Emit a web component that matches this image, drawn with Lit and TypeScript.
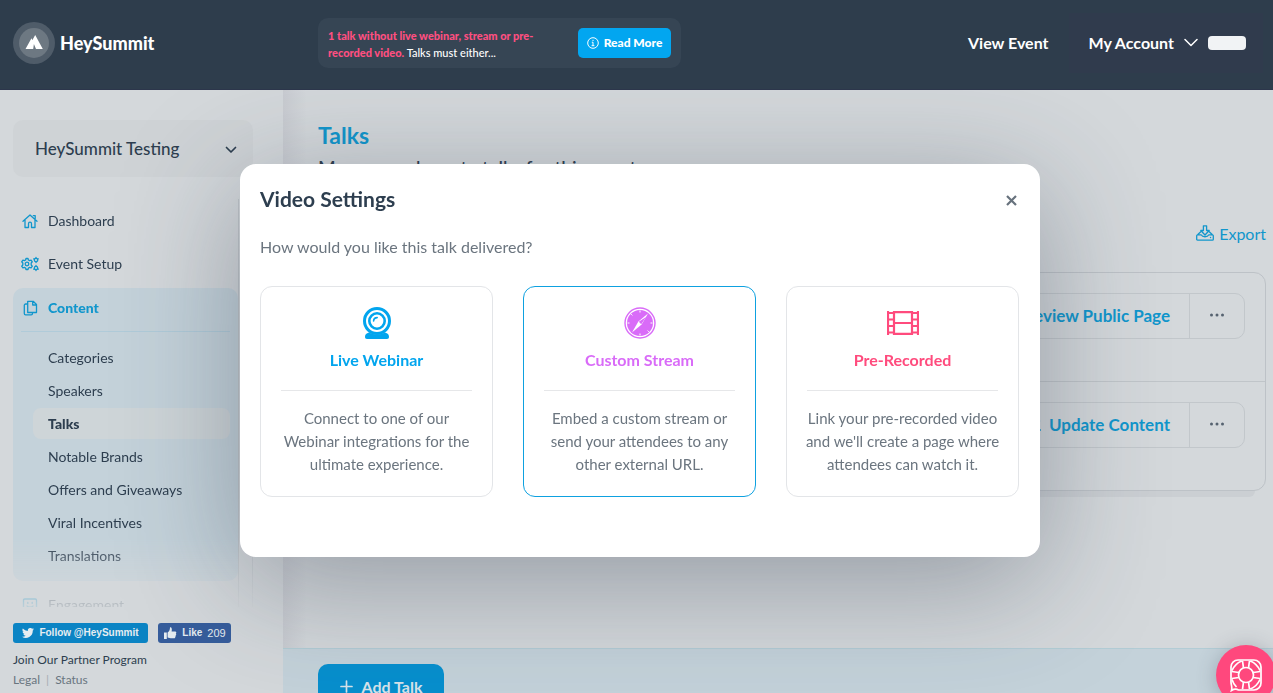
import { LitElement, html, css, svg, nothing } from "lit";
import { customElement, state } from "lit/decorators.js";
import { classMap } from "lit/directives/class-map.js";

const icons = {
  home: svg`<path d="M1 8.200 8 2l7 6.200M3 7v7.500h3.500v-3.800a1.500 1.500 0 0 1 3 0v3.800H13V7M11.300 2.600h1.900v3"/>`,
  copy: svg`<path d="M5.700 1.300h5.500l3.300 3.200v8H5.700zM10.700 1.500v3.500h3.500M5.600 4H3.600a1.300 1.300 0 0 0-1.300 1.300v8.200a1.300 1.300 0 0 0 1.300 1.300h5.600a1.300 1.300 0 0 0 1.300-1.300v-.9"/>`,
  smile: svg`<path d="M1.500 15V3.200c0-.8.4-1.200 1.200-1.200h10.600c.8 0 1.200.4 1.200 1.200V15M5 9c.8 1.400 5.200 1.400 6 0M5.800 5.400v1M10.200 5.400v1"/>`,
};

@customElement("app-root")
export class AppRoot extends LitElement {
  @state() private picked = 1;

  private subItems = ["Categories", "Speakers", "Talks", "Notable Brands", "Offers and Giveaways", "Viral Incentives", "Translations"];

  private options = [
    {
      tone: "blue",
      title: "Live Webinar",
      lines: ["Connect to one of our", "Webinar integrations for the", "ultimate experience."],
      icon: svg`<circle cx="16" cy="14" r="12.500" fill="none" stroke="currentColor" stroke-width="3"/>
        <circle cx="16" cy="14" r="7.700" fill="none" stroke="currentColor" stroke-width="2.600"/>
        <path d="M12.600 14a3.600 3.600 0 0 1 3.600-3.400" fill="none" stroke="currentColor" stroke-width="1.600" stroke-linecap="round"/>
        <path d="M8 25.600c4.800 2.600 11.200 2.600 16 0 2.700.6 4 2.200 4 4.200 0 1.500-.7 2.200-2 2.200H6c-1.300 0-2-.7-2-2.200 0-2 1.300-3.600 4-4.200z" fill="currentColor"/>`,
    },
    {
      tone: "violet",
      title: "Custom Stream",
      lines: ["Embed a custom stream or", "send your attendees to any", "other external URL."],
      icon: svg`<circle cx="16" cy="16" r="15" fill="none" stroke="currentColor" stroke-width="1.400"/>
        <circle cx="16" cy="16" r="13" fill="currentColor"/>
        <path d="M24 6.500 17.600 17.600 8 25.500l6.400-11.100z" fill="#fff"/>
        <path d="m22 10-7.200 4.800 2.400 2.400z" fill="currentColor"/>
        <path d="M16 3.500v2M16 26.500v2M3.500 16h2M26.500 16h2M7.200 7.200l1.200 1.200M23.600 23.600l1.200 1.200" stroke="#fff" stroke-width="1"/>`,
    },
    {
      tone: "pink",
      title: "Pre-Recorded",
      lines: ["Link your pre-recorded video", "and we'll create a page where", "attendees can watch it."],
      icon: svg`<path d="M1 4v24M31 4v24M7 4v24M25 4v24M7 5.200h18M7 26.800h18M7 16h18M1 6h6M1 12.500h6M1 19h6M1 25.500h6M25 6h6M25 12.500h6M25 19h6M25 25.500h6" fill="none" stroke="currentColor" stroke-width="2.200"/>`,
    },
  ];

  static styles = css`
    :host {
      display: block;
      height: 100vh;
      overflow: hidden;
      font-family: Lato, "Liberation Sans", sans-serif;
      color: #2d3e4f;
      background: #d4d8db;
    }
    * { box-sizing: border-box; }
    button, select { font: inherit; color: inherit; background: none; border: 0; padding: 0; margin: 0; }
    button { cursor: pointer; }
    a { color: inherit; text-decoration: none; }
    h1, h2, h3, p, ul { margin: 0; padding: 0; }
    ul { list-style: none; }
    svg { display: block; flex: none; }
    .line { fill: none; stroke: currentColor; stroke-width: 1.300; stroke-linejoin: round; stroke-linecap: round; }

    .shell { display: flex; flex-direction: column; height: 100%; }
    .top {
      position: relative;
      z-index: 3;
      flex: none;
      display: grid;
      grid-template-columns: 305px 363px 1fr;
      align-items: center;
      height: 90px;
      padding: 0 10px 4px 13px;
      background: #2e3d4c;
      border-bottom: 1px solid #2c364b;
      color: #fff;
    }
    .brand { display: flex; align-items: center; gap: 5px; font-size: 18px; font-weight: 900; }
    .notice {
      display: flex; align-items: center; justify-content: space-between;
      height: 50px; padding: 0 10px; border-radius: 10px;
      background: #364554; font-size: 11px; line-height: 17px; font-weight: 500;
    }
    .notice p { width: 224px; padding-top: 2px; }
    .notice strong { color: #ff4f81; font-weight: 900; }
    .read {
      display: flex; align-items: center; justify-content: center; gap: 5px;
      width: 93px; height: 30px; border-radius: 5px;
      background: #02a6f0; font-size: 12px; font-weight: 900;
    }
    .links { display: flex; justify-content: flex-end; align-items: center; gap: 20px; font-size: 16px; font-weight: 700; }
    .account {
      display: flex; align-items: center; gap: 10px; height: 60px; padding: 0 17px 0 20px;
      background: #303b4d;
    }
    .mask { width: 38px; height: 14px; border-radius: 4px; background: #f1f3f5; }

    .body { flex: 1; min-height: 0; display: flex; }
    .side { flex: none; display: flex; flex-direction: column; width: 283px; padding: 30px 30px 0 13px; }
    .picker { flex: none; position: relative; display: block; }
    .picker select {
      appearance: none; width: 100%; height: 57px; padding: 0 22px;
      border-radius: 10px; background: #cfd3d6; font-size: 17px; font-weight: 500;
    }
    .picker svg { position: absolute; right: 16px; top: 24px; pointer-events: none; }
    .scroll {
      flex: 1; min-height: 0; display: flex; margin-top: 22px; padding-right: 13px;
      overflow: hidden; border-right: 1px solid #c4c9cd;
      mask-image: linear-gradient(#000 340px, rgba(0, 0, 0, 0.1) 410px);
    }
    .nav { flex: 1; border-right: 1px solid #c0c5c9; height: max-content; }
    .nav > li > a { display: flex; align-items: center; gap: 9px; height: 43px; padding: 0 8px; font-size: 14px; }
    .nav > li > a svg { color: #1196cc; width: 18px; }
    .open { border-radius: 10px; background: #c4d2da; padding: 0 8px 8px; margin: 3px 0 2px; height: 293px; }
    .nav > .open > a { padding: 0; height: 39px; color: #1196cc; font-weight: 900; }
    .sub { margin: 4px 0 0; padding: 10px 0 0 12px; border-top: 1px solid #b0cbd9; }
    .sub a { display: block; margin-bottom: 2px; padding: 0 15px; line-height: 31px; font-size: 14px; border-radius: 8px; }
    .sub .now { background: #ced5d8; font-weight: 900; }
    .foot { flex: none; padding: 16px 0 3px; font-size: 12px; line-height: 20px; }
    .social { display: flex; gap: 10px; padding-bottom: 7px; font: 700 10px/20px "Liberation Sans", Arial, sans-serif; color: #e6edf1; }
    .social a { display: flex; align-items: center; justify-content: center; gap: 5px; height: 20px; width: 135px; border-radius: 3px; background: #0b84c4; }
    .social .fb { width: 73px; background: #365d9c; }
    .social span { font-weight: 400; font-size: 11px; }
    .legal { display: flex; gap: 6px; color: #69757f; }
    .legal i { font-style: normal; color: #a5acb2; }

    .main {
      flex: 1; min-width: 0; display: flex; flex-direction: column;
      background: linear-gradient(90deg, rgba(90, 80, 110, 0.090), rgba(90, 80, 110, 0) 24px);
    }
    .page { flex: 1; padding: 32px 7px 0 35px; }
    h1 { font-size: 23px; line-height: 26px; font-weight: 700; color: #1196cc; }
    .lead { font-size: 19px; line-height: 40px; font-weight: 500; }
    .export { display: flex; justify-content: flex-end; align-items: center; gap: 5px; height: 48px; margin-top: 21px; font-size: 16px; color: #1196cc; }
    .rows { margin-top: 15px; border: 1px solid #bdc2c7; border-radius: 12px; }
    .row { box-sizing: content-box; display: flex; justify-content: flex-end; height: 68px; padding: 20px; }
    .row + .row { border-top: 1px solid #c0c5c9; }
    .pair { display: flex; height: 46px; border: 1px solid #c2c7cb; border-radius: 10px; }
    .pair button { display: flex; align-items: center; gap: 8px; padding: 0 19px 2px; font-size: 17px; font-weight: 700; color: #1196cc; }
    .pair .more { width: 55px; padding: 0 0 2px; justify-content: center; color: #566270; border-left: 1px solid #c2c7cb; }
    .edge { height: 6px; margin: 0 11px; border-radius: 0 0 10px 10px; background: #cbcfd3; }
    .bar { height: 45px; padding: 15px 35px 0; overflow: hidden; border-top: 1px solid #b2ccd5; background: #c4d2da; }
    .add {
      display: flex; align-items: center; justify-content: center; gap: 9px; width: 126px; height: 45px;
      border-radius: 10px; background: #078fce; color: #d7e3ea; font-size: 16px; font-weight: 700;
    }

    .layer { position: fixed; inset: 0; z-index: 2; display: flex; justify-content: center; align-items: flex-start; padding: 164px 0 0 7px; }
    .modal {
      width: 800px; padding: 20px 21px 60px 20px; border-radius: 16px; background: #fff;
      box-shadow: 0 25px 120px rgba(45, 55, 72, 0.390);
    }
    .head { display: flex; justify-content: space-between; align-items: center; padding-right: 2px; }
    h2 { font-size: 21px; line-height: 30px; font-weight: 700; }
    .close { padding-top: 2px; color: #67727d; }
    .ask { padding: 21px 0 27px; font-size: 16px; line-height: 24px; color: #6b757f; }
    .cards { display: grid; grid-template-columns: repeat(3, minmax(0, 1fr)); gap: 30px; }
    .card {
      display: flex; flex-direction: column; align-items: center; height: 211px; padding: 20px;
      border: 1px solid #e3e5e8; border-radius: 12px;
    }
    .card.on { border-color: #0ea1e0; }
    .card h3 { width: 100%; padding: 9px 0 18px; border-bottom: 1px solid #e6e7e9; font-size: 16px; line-height: 24px; font-weight: 700; text-align: center; }
    .card p { padding-top: 16px; font-size: 15px; line-height: 23px; color: #6b757f; white-space: nowrap; }
    .blue { color: #02a5ee; }
    .violet { color: #d96bf8; }
    .pink { color: #ff4b7d; }
    .help {
      position: fixed; z-index: 3; right: -3px; bottom: -12px; display: flex; align-items: center; justify-content: center;
      width: 60px; height: 60px; border-radius: 50%; background: #ff487d; color: #fff; box-shadow: 0 2px 20px rgba(60, 70, 85, 0.300);
    }
  `;

  private row(label: string, glyph: unknown) {
    return html`<div class="row"><div class="pair">
      <button>${glyph}${label}</button>
      <button class="more" aria-label="More actions"><svg width="16" height="4" fill="currentColor"><circle cx="2.500" cy="2" r="1.500"/><circle cx="8" cy="2" r="1.500"/><circle cx="13.500" cy="2" r="1.500"/></svg></button>
    </div></div>`;
  }

  render() {
    return html`
      <div class="shell">
        <header class="top">
          <a class="brand" href="#">
            <svg width="42" height="42" viewBox="0 0 42 42"><circle cx="21" cy="21" r="21" fill="#4f5c69"/><circle cx="21" cy="21" r="15" fill="#6d7882"/>
              <path d="M12.500 27 17.800 17.500 18.400 16.200 21 21.300 20.200 27zM19.300 18.200 22.200 13 29.800 27H23z" fill="#fff"/></svg>
            HeySummit
          </a>
          <div class="notice">
            <p><strong>1 talk without live webinar, stream or pre-recorded video.</strong> Talks must either...</p>
            <button class="read">
              <svg width="12" height="12" viewBox="0 0 12 12" fill="none" stroke="currentColor"><circle cx="6" cy="6" r="5.300"/><path d="M4.800 5.200H6v3.500M4.600 8.700h2.800M6 2.800v1.200"/></svg>
              Read More
            </button>
          </div>
          <nav class="links">
            <a href="#">View Event</a>
            <button class="account">My Account
              <svg width="14" height="9" viewBox="0 0 14 9" fill="none" stroke="currentColor" stroke-width="1.500" stroke-linecap="round" stroke-linejoin="round"><path d="M1 1.500l6 6 6-6"/></svg>
              <span class="mask"></span>
            </button>
          </nav>
        </header>

        <div class="body">
          <aside class="side">
            <label class="picker">
              <select aria-label="Event"><option>HeySummit Testing</option></select>
              <svg width="12" height="12" viewBox="0 0 12 12" fill="none" stroke="currentColor" stroke-width="1.700" stroke-linecap="round" stroke-linejoin="round"><path d="M1.500 3.500 6 8l4.500-4.500"/></svg>
            </label>
            <div class="scroll">
              <ul class="nav">
                <li><a href="#"><svg class="line" height="16" viewBox="0 0 16 16">${icons.home}</svg>Dashboard</a></li>
                <li><a href="#"><svg class="line" height="16" viewBox="0 0 18 16">
                  <circle cx="6" cy="8" r="1.800"/><path d="M5 2.500h2l.4 1.500 1.200.6 1.500-.5 1.200 1.700L10.200 7v2l1.100 1.200-1.200 1.700-1.500-.5-1.200.6-.4 1.500H5L4.600 12l-1.200-.6-1.500.5-1.200-1.700L1.800 9V7L.7 5.800l1.200-1.700 1.500.5L4.600 4z"/>
                  <circle cx="15" cy="4" r="1.700"/><circle cx="15" cy="12" r="1.700"/><path d="M15 1.300v.8M15 5.800v.8M12.700 2.800l.7.300M17.300 2.800l-.7.300M12.700 13.200l.7-.3M17.300 13.200l-.7-.3M15 9.400v.8M15 13.800v.8"/></svg>Event Setup</a></li>
                <li class="open">
                  <a href="#"><svg class="line" height="16" viewBox="0 0 16 16">${icons.copy}</svg>Content</a>
                  <ul class="sub">
                    ${this.subItems.map((t) => html`<li><a href="#" class=${t === "Talks" ? "now" : nothing}>${t}</a></li>`)}
                  </ul>
                </li>
                <li><a href="#"><svg class="line" height="16" viewBox="0 0 16 16">${icons.smile}</svg>Engagement</a></li>
              </ul>
            </div>
            <footer class="foot">
              <div class="social">
                <a href="#"><svg width="12" height="10" viewBox="0 0 24 20" fill="currentColor"><path d="M24 2.400a10 10 0 0 1-2.800.8A5 5 0 0 0 23.300.5a10 10 0 0 1-3.100 1.200 4.900 4.900 0 0 0-8.400 4.500A14 14 0 0 1 1.700 1a4.900 4.900 0 0 0 1.500 6.600 5 5 0 0 1-2.200-.6 4.900 4.900 0 0 0 3.900 4.900 5 5 0 0 1-2.200.1 4.900 4.900 0 0 0 4.600 3.400A9.900 9.900 0 0 1 0 17.500 14 14 0 0 0 21.500 5a10 10 0 0 0 2.500-2.600z"/></svg>Follow @HeySummit</a>
                <a class="fb" href="#"><svg width="14" height="14" viewBox="0 0 14 14" fill="currentColor"><path d="M1 6.500h2.800V13H1zM4.600 6.500C6.500 5 7 3.500 7 1.200c1.600-.3 2.300 1.300 1.600 4.300h3.600c1.300 0 1.400 1.500.6 1.900.7.600.5 1.500-.2 1.800.5.600.2 1.400-.4 1.600.3.900-.2 1.500-1.200 1.500H7.600L4.600 11.500z"/></svg>Like <span>209</span></a>
              </div>
              <a href="#">Join Our Partner Program</a>
              <div class="legal"><a href="#">Legal</a><i>|</i><a href="#">Status</a></div>
            </footer>
          </aside>

          <main class="main">
            <section class="page">
              <h1>Talks</h1>
              <p class="lead">Manage and create talks for this event.</p>
              <a class="export" href="#">
                <svg width="18" height="16" viewBox="0 0 18 16" class="line"><path d="M7.400.8h3.200v4.700h2.600L9 10 4.800 5.500h2.600zM4.500 7 1.800 9.500M13.500 7l2.700 2.500M1.600 9.800h3.500c1.500 2.600 6.300 2.600 7.800 0h3.500c.6 0 .9.300.9.900v3.500c0 .6-.3.900-.9.900H1.600c-.6 0-.9-.3-.9-.9v-3.500c0-.6.300-.9.900-.9zM14.500 12.500h.1"/></svg>
                Export
              </a>
              <div class="rows">
                ${this.row("Preview Public Page", nothing)}
                ${this.row("Update Content", html`<svg width="14" height="14" viewBox="0 0 14 14" class="line"><path d="M1 13 2 9.500 10 1.500l2.500 2.500-8 8zM8 13h5.500"/></svg>`)}
              </div>
              <div class="edge"></div>
            </section>
            <div class="bar"><button class="add">
              <svg width="13" height="13" viewBox="0 0 13 13" fill="none" stroke="currentColor" stroke-width="1.700" stroke-linecap="round"><path d="M6.500 1v11M1 6.500h11"/></svg>Add Talk</button></div>
          </main>
        </div>
      </div>

      <div class="layer">
        <section class="modal" role="dialog" aria-modal="true" aria-label="Video Settings">
          <div class="head">
            <h2>Video Settings</h2>
            <button class="close" aria-label="Close"><svg width="11" height="11" viewBox="0 0 11 11" fill="none" stroke="currentColor" stroke-width="2.200"><path d="M1 1l9 9M10 1l-9 9"/></svg></button>
          </div>
          <p class="ask">How would you like this talk delivered?</p>
          <div class="cards">
            ${this.options.map((o, i) => html`
              <button class=${classMap({ card: true, on: i === this.picked })} @click=${() => (this.picked = i)}>
                <svg class=${o.tone} width="32" height="32" viewBox="0 0 32 32">${o.icon}</svg>
                <h3 class=${o.tone}>${o.title}</h3>
                <p>${o.lines.map((l, n) => html`${n ? html`<br>` : nothing}${l}`)}</p>
              </button>`)}
          </div>
        </section>
      </div>

      <button class="help" aria-label="Help">
        <svg width="34" height="34" viewBox="0 0 34 34" fill="none" stroke="currentColor" stroke-width="1.700"><path d="M9 2h16a7 7 0 0 1 7 7v16a7 7 0 0 1-7 7H9.500c-2.500-1.500-4.500-1-7 .5C3.500 29 2 27 2 24V9a7 7 0 0 1 7-7z"/><circle cx="17" cy="17" r="7.500"/><path d="M14.500 9.800 13.500 2.800M19.500 9.800l1-7M14.500 24.200l-1 7M19.500 24.200l1 7M9.800 14.500l-7-1M9.800 19.500l-7 1M24.200 14.500l7-1M24.200 19.500l7 1M3 12.500C5 8 8 5 12.500 3M21.500 3C26 5 29 8 31 12.500M31 21.500c-2 4.500-5 7.500-9.500 9.500M3 21.500c1 3.500 2.500 5.500 4.500 7.500"/></svg>
      </button>
    `;
  }
}
